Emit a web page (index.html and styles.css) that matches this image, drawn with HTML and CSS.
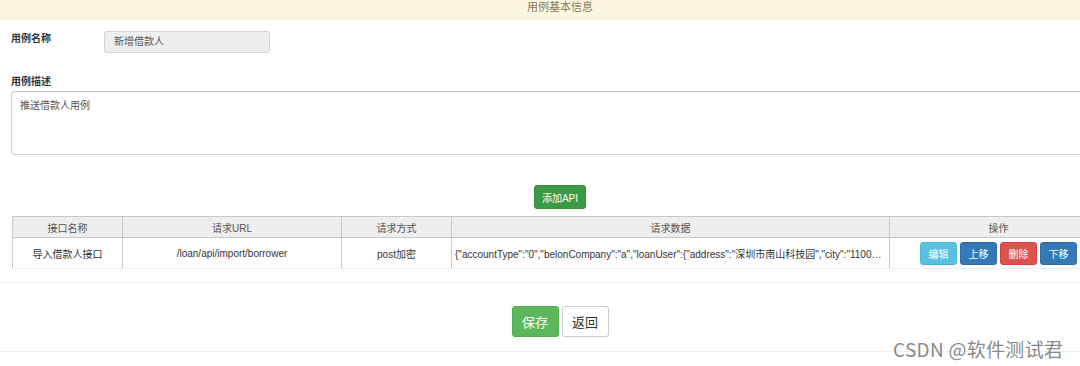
FILE: index.html
```html
<!DOCTYPE html>
<html>
  <head>
    <meta charset="utf-8" />
    <title>用例基本信息</title>
    <link rel="stylesheet" href="styles.css">
  </head>
  <body>
    <div class="page">
      <div class="panel-heading">用例基本信息</div>

      <div class="form">
        <div class="form-row">
          <label class="form-label">用例名称</label>
          <div class="form-input">新增借款人</div>
        </div>
        <div class="form-block">
          <label class="form-label">用例描述</label>
          <div class="form-textarea">推送借款人用例</div>
        </div>
      </div>

      <div class="add-bar">
        <button class="btn btn-add">添加API</button>
      </div>

      <table class="api-table">
        <tr>
          <th class="c-name">接口名称</th>
          <th class="c-url">请求URL</th>
          <th class="c-method">请求方式</th>
          <th class="c-data">请求数据</th>
          <th class="c-ops">操作</th>
        </tr>
        <tr>
          <td>导入借款人接口</td>
          <td>/loan/api/import/borrower</td>
          <td>post加密</td>
          <td class="data-cell"><div class="ellipsis">{"accountType":"0","belonCompany":"a","loanUser":{"address":"深圳市南山科技园","city":"110000","county":"110101"}}</div></td>
          <td>
            <div class="ops">
              <button class="btn btn-sm btn-info">编辑</button>
              <button class="btn btn-sm btn-primary">上移</button>
              <button class="btn btn-sm btn-danger">删除</button>
              <button class="btn btn-sm btn-primary">下移</button>
            </div>
          </td>
        </tr>
      </table>

      <div class="footer-bar">
        <button class="btn btn-save">保存</button>
        <button class="btn btn-back">返回</button>
      </div>
    </div>
    <div class="watermark">CSDN @软件测试君</div>
  </body>
</html>
```

FILE: styles.css
```css
html,
body {
  margin: 0;
  background: #fff;
  overflow: hidden;
}

body {
  font-family: "Liberation Sans", "Noto Sans CJK SC", sans-serif;
  color: #333;
  font-size: 11px;
}

.page {
  width: 1120px;
}

.panel-heading {
  height: 20px;
  line-height: 14px;
  background: #fcf6e1;
  border-bottom: 1px solid #f7f0dc;
  color: #8a7858;
  text-align: center;
  font-size: 11px;
  box-sizing: border-box;
}

/* form */

.form {
  padding: 11px 11px 0 11px;
}

.form-row {
  display: flex;
  align-items: flex-start;
  height: 22px;
}

.form-label {
  display: block;
  width: 93px;
  font-weight: bold;
  font-size: 10px;
  color: #333;
  line-height: 14px;
  padding-top: 1px;
}

.form-input {
  width: 166px;
  height: 22px;
  line-height: 20px;
  border: 1px solid #d2d2d2;
  border-radius: 3px;
  background: #eee;
  padding-left: 9px;
  font-size: 10px;
  color: #555;
  box-sizing: border-box;
}

.form-block {
  margin-top: 21px;
}

.form-block .form-label {
  margin-bottom: 2px;
}

.form-textarea {
  width: 1096px;
  height: 64px;
  border: 1px solid #ccc;
  border-radius: 3px;
  box-shadow: inset 0 1px 1px rgba(0, 0, 0, 0.06);
  padding: 5px 8px;
  box-sizing: border-box;
  font-size: 10px;
  color: #555;
}

/* buttons */

.btn {
  border: 1px solid transparent;
  border-radius: 3px;
  font-family: "Liberation Sans", "Noto Sans CJK SC", sans-serif;
  color: #fff;
  padding: 0;
  cursor: pointer;
}

.add-bar {
  display: flex;
  justify-content: center;
  margin-top: 30px;
}

.btn-add {
  width: 52px;
  height: 24px;
  background: #3c9a45;
  border-color: #388f40;
  font-size: 10px;
}

/* table */

.api-table {
  margin: 7px 0 0 12px;
  width: 1096px;
  border-collapse: collapse;
  table-layout: fixed;
  font-size: 10px;
}

.api-table th,
.api-table td {
  border: 1px solid #c8c8c8;
  text-align: center;
  font-weight: normal;
  padding: 0 4px;
  box-sizing: border-box;
}

.api-table th {
  height: 21px;
  background: #eee;
  color: #555;
}

.api-table td {
  height: 31px;
  color: #333;
  border-bottom-color: #f0f0f0;
}

.c-name { width: 110px; }
.c-url { width: 219px; }
.c-method { width: 110px; }
.c-data { width: 438px; }

.data-cell {
  text-align: left !important;
  padding: 0 4px 0 3px !important;
}

.ellipsis {
  white-space: nowrap;
  overflow: hidden;
  text-overflow: ellipsis;
}

.ops {
  display: flex;
  justify-content: center;
  gap: 3px;
}

.btn-sm {
  width: 37px;
  height: 23px;
  font-size: 10px;
}

.btn-info { background: #5bc0de; border-color: #46b8da; }
.btn-primary { background: #337ab7; border-color: #2e6da4; }
.btn-danger { background: #d9534f; border-color: #d43f3a; }

/* footer */

.footer-bar {
  margin-top: 13px;
  border-top: 1px solid #eee;
  border-bottom: 1px solid #eee;
  display: flex;
  justify-content: center;
  gap: 3px;
  padding: 23px 0 14px;
}

.btn-save {
  width: 47px;
  height: 31px;
  background: #5cb85c;
  border-color: #4cae4c;
  font-size: 13px;
}

.btn-back {
  width: 47px;
  height: 31px;
  background: #fff;
  border-color: #ccc;
  color: #333;
  font-size: 13px;
}

.watermark {
  position: absolute;
  left: 893px;
  top: 335px;
  font-family: "Noto Sans CJK SC", sans-serif;
  font-size: 19px;
  color: #8a8a8a;
  text-shadow: 0 0 2px #fff;
  letter-spacing: 0.3px;
}
```
